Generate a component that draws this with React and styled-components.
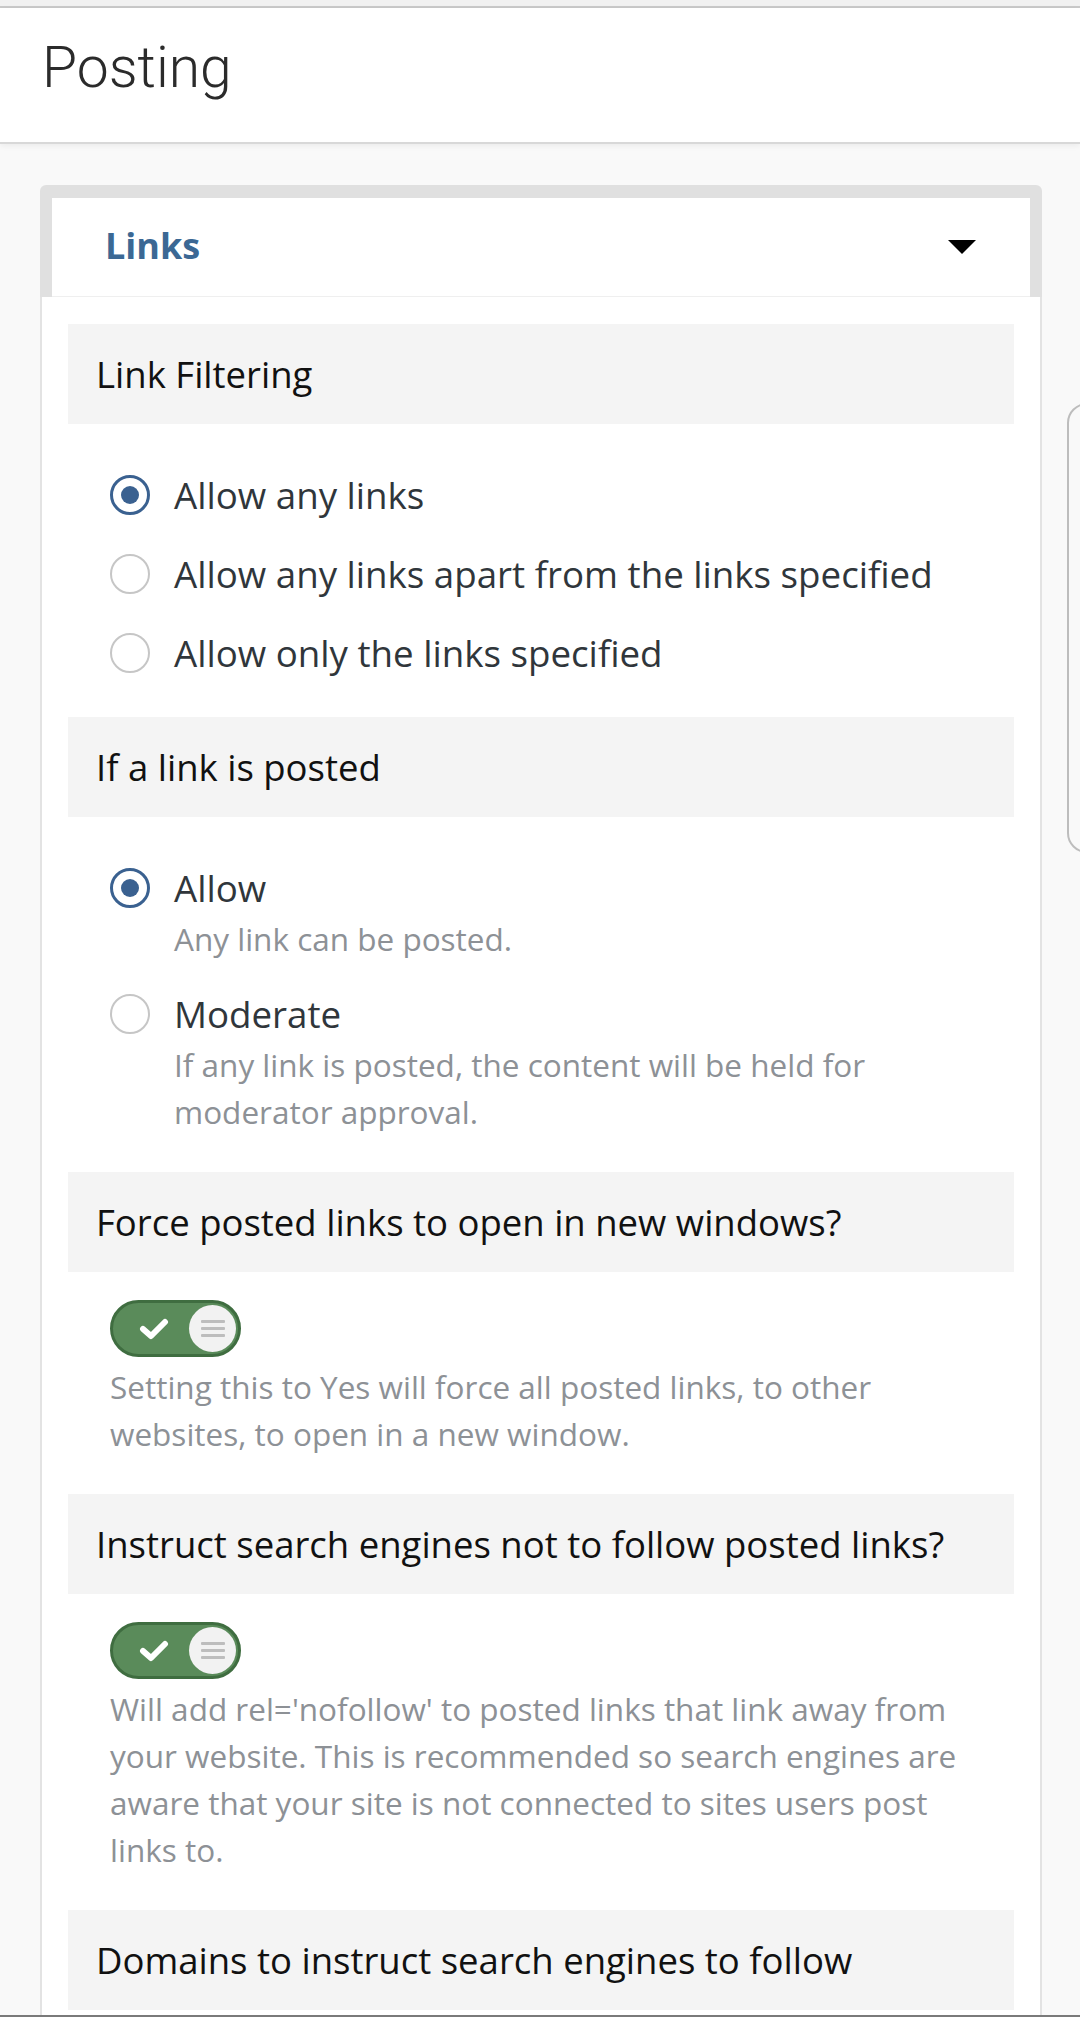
import React from "react";
import styled, { createGlobalStyle } from "styled-components";

const GlobalStyle = createGlobalStyle`
	html, body {
		margin: 0;
		padding: 0;
		background: #f9f9f9;
	}
	body {
		font-family: "Open Sans", "Liberation Sans", sans-serif;
		overflow: hidden;
	}
`;

const Page = styled.div`
	position: relative;
	min-height: 2017px;
`;

const TopStrip = styled.div`
	height: 6px;
	background: #f1f1f1;
	border-bottom: 2px solid #c9c9c9;
`;

const Header = styled.header`
	height: 136px;
	box-sizing: border-box;
	padding: 27px 42px 0;
	background: #fff;
	border-bottom: 2px solid #d8d8d8;
	box-shadow: 0 2px 6px rgba(0, 0, 0, 0.06);
`;

const PageTitle = styled.h1`
	margin: 0;
	font-family: "Roboto Light", Roboto, "Liberation Sans", sans-serif;
	font-weight: 300;
	font-size: 57px;
	line-height: 66px;
	color: #2b2b2b;
`;

const Main = styled.main`
	padding: 41px 38px 0 40px;
`;

const Card = styled.section`
	display: flex;
	flex-direction: column;
`;

const CardHead = styled.div`
	background: #e0e0e0;
	border-radius: 6px 6px 0 0;
	padding: 13px 12px 0;
`;

const CardHeadInner = styled.div`
	height: 99px;
	box-sizing: border-box;
	background: #fff;
	display: flex;
	align-items: flex-start;
	justify-content: space-between;
	padding: 23px 54px 0 53px;
	border-bottom: 1px solid #efefef;
`;

const CardTitle = styled.h2`
	margin: 0;
	font-size: 36px;
	line-height: 49px;
	font-weight: 700;
	color: #3b6894;
`;

const Caret = styled.span`
	margin-top: 19px;
	width: 0;
	height: 0;
	border-left: 14px solid transparent;
	border-right: 14px solid transparent;
	border-top: 14px solid #000;
`;

const CardBody = styled.div`
	background: #fff;
	border: 2px solid #e3e3e3;
	border-top: none;
	padding: 27px 26px 0;
`;

const SectionTitle = styled.h3`
	margin: 0;
	background: #f4f4f4;
	padding: 25px 28px 25px;
	font-size: 36.5px;
	line-height: 50px;
	font-weight: 400;
	color: #111;
`;

const SectionBody = styled.div`
	padding: 28px 27px 37px 42px;
`;

const RadioList = styled.div`
	display: flex;
	flex-direction: column;
	gap: 25px;
	padding-top: 16px;
`;

const RadioRow = styled.label`
	display: grid;
	grid-template-columns: 40px 1fr;
	column-gap: 24px;
	align-items: center;
`;

const RadioCircle = styled.span`
	width: 40px;
	height: 40px;
	box-sizing: border-box;
	border-radius: 50%;
	border: ${(p) => (p.checked ? "3px solid #3a6190" : "2.5px solid #c6c6c6")};
	display: flex;
	align-items: center;
	justify-content: center;
	background: #fff;

	&::after {
		content: "";
		width: 18px;
		height: 18px;
		border-radius: 50%;
		background: ${(p) => (p.checked ? "#3a6190" : "transparent")};
	}
`;

const RadioLabel = styled.span`
	font-size: 36.7px;
	line-height: 54px;
	color: #30363b;
`;

const Hint = styled.p`
	margin: ${(p) => (p.gap ? `${p.gap}px` : "0")} 0 0;
	font-size: 31.5px;
	line-height: 47px;
	color: #8d9196;
	grid-column: 2;
`;

const Toggle = styled.span`
	width: 131px;
	height: 57px;
	box-sizing: border-box;
	border-radius: 29px;
	border: 3px solid #3f6d40;
	background: #5a8b5a;
	display: flex;
	align-items: center;
	justify-content: space-between;
	padding: 0 2px 0 26px;
`;

const Knob = styled.span`
	width: 47px;
	height: 47px;
	border-radius: 50%;
	background: #f2f2f2;
	display: flex;
	flex-direction: column;
	align-items: center;
	justify-content: center;
	gap: 4px;

	i {
		display: block;
		width: 24px;
		height: 3px;
		background: #bdbdbd;
		border-radius: 1px;
	}
`;

const TextArea = styled.div`
	height: 160px;
	border: 2px solid #ccc;
	border-radius: 4px;
	background: #fff;
`;

const SideHandle = styled.div`
	position: absolute;
	top: 403px;
	left: 1067px;
	width: 40px;
	height: 450px;
	box-sizing: border-box;
	border: 2px solid #bdbdbd;
	border-radius: 22px;
	background: #f9f9f9;
`;

const BottomEdge = styled.div`
	position: fixed;
	left: 0;
	right: 0;
	bottom: 0;
	height: 2px;
	background: #7a7a7a;
`;

function Check() {
	return (
		<svg width="30" height="22" viewBox="0 0 30 22">
			<path d="M4 11 L12 18 L26 4" fill="none" stroke="#fff" strokeWidth="6" strokeLinecap="round" strokeLinejoin="round" />
		</svg>
	);
}

function Switch() {
	return (
		<Toggle>
			<Check />
			<Knob>
				<i />
				<i />
				<i />
			</Knob>
		</Toggle>
	);
}

function Radio({ checked, label, hint }) {
	return (
		<RadioRow>
			<RadioCircle checked={checked} />
			<RadioLabel>{label}</RadioLabel>
			{hint && <Hint>{hint}</Hint>}
		</RadioRow>
	);
}

export default function App() {
	return (
		<Page>
			<GlobalStyle />
			<TopStrip />
			<Header>
				<PageTitle>Posting</PageTitle>
			</Header>
			<Main>
				<Card>
					<CardHead>
						<CardHeadInner>
							<CardTitle>Links</CardTitle>
							<Caret />
						</CardHeadInner>
					</CardHead>
					<CardBody>
						<SectionTitle>Link Filtering</SectionTitle>
						<SectionBody>
							<RadioList>
								<Radio checked label="Allow any links" />
								<Radio label="Allow any links apart from the links specified" />
								<Radio label="Allow only the links specified" />
							</RadioList>
						</SectionBody>

						<SectionTitle>If a link is posted</SectionTitle>
						<SectionBody>
							<RadioList>
								<Radio checked label="Allow" hint="Any link can be posted." />
								<Radio
									label="Moderate"
									hint="If any link is posted, the content will be held for moderator approval."
								/>
							</RadioList>
						</SectionBody>

						<SectionTitle>Force posted links to open in new windows?</SectionTitle>
						<SectionBody>
							<Switch />
							<Hint gap={6}>
								Setting this to Yes will force all posted links, to other websites, to open in a new window.
							</Hint>
						</SectionBody>

						<SectionTitle>Instruct search engines not to follow posted links?</SectionTitle>
						<SectionBody>
							<Switch />
							<Hint gap={6}>
								Will add rel='nofollow' to posted links that link away from your website. This is
								recommended so search engines are aware that your site is not connected to sites users
								post links to.
							</Hint>
						</SectionBody>

						<SectionTitle>Domains to instruct search engines to follow</SectionTitle>
						<SectionBody>
							<TextArea />
						</SectionBody>
					</CardBody>
				</Card>
			</Main>
			<SideHandle />
			<BottomEdge />
		</Page>
	);
}
